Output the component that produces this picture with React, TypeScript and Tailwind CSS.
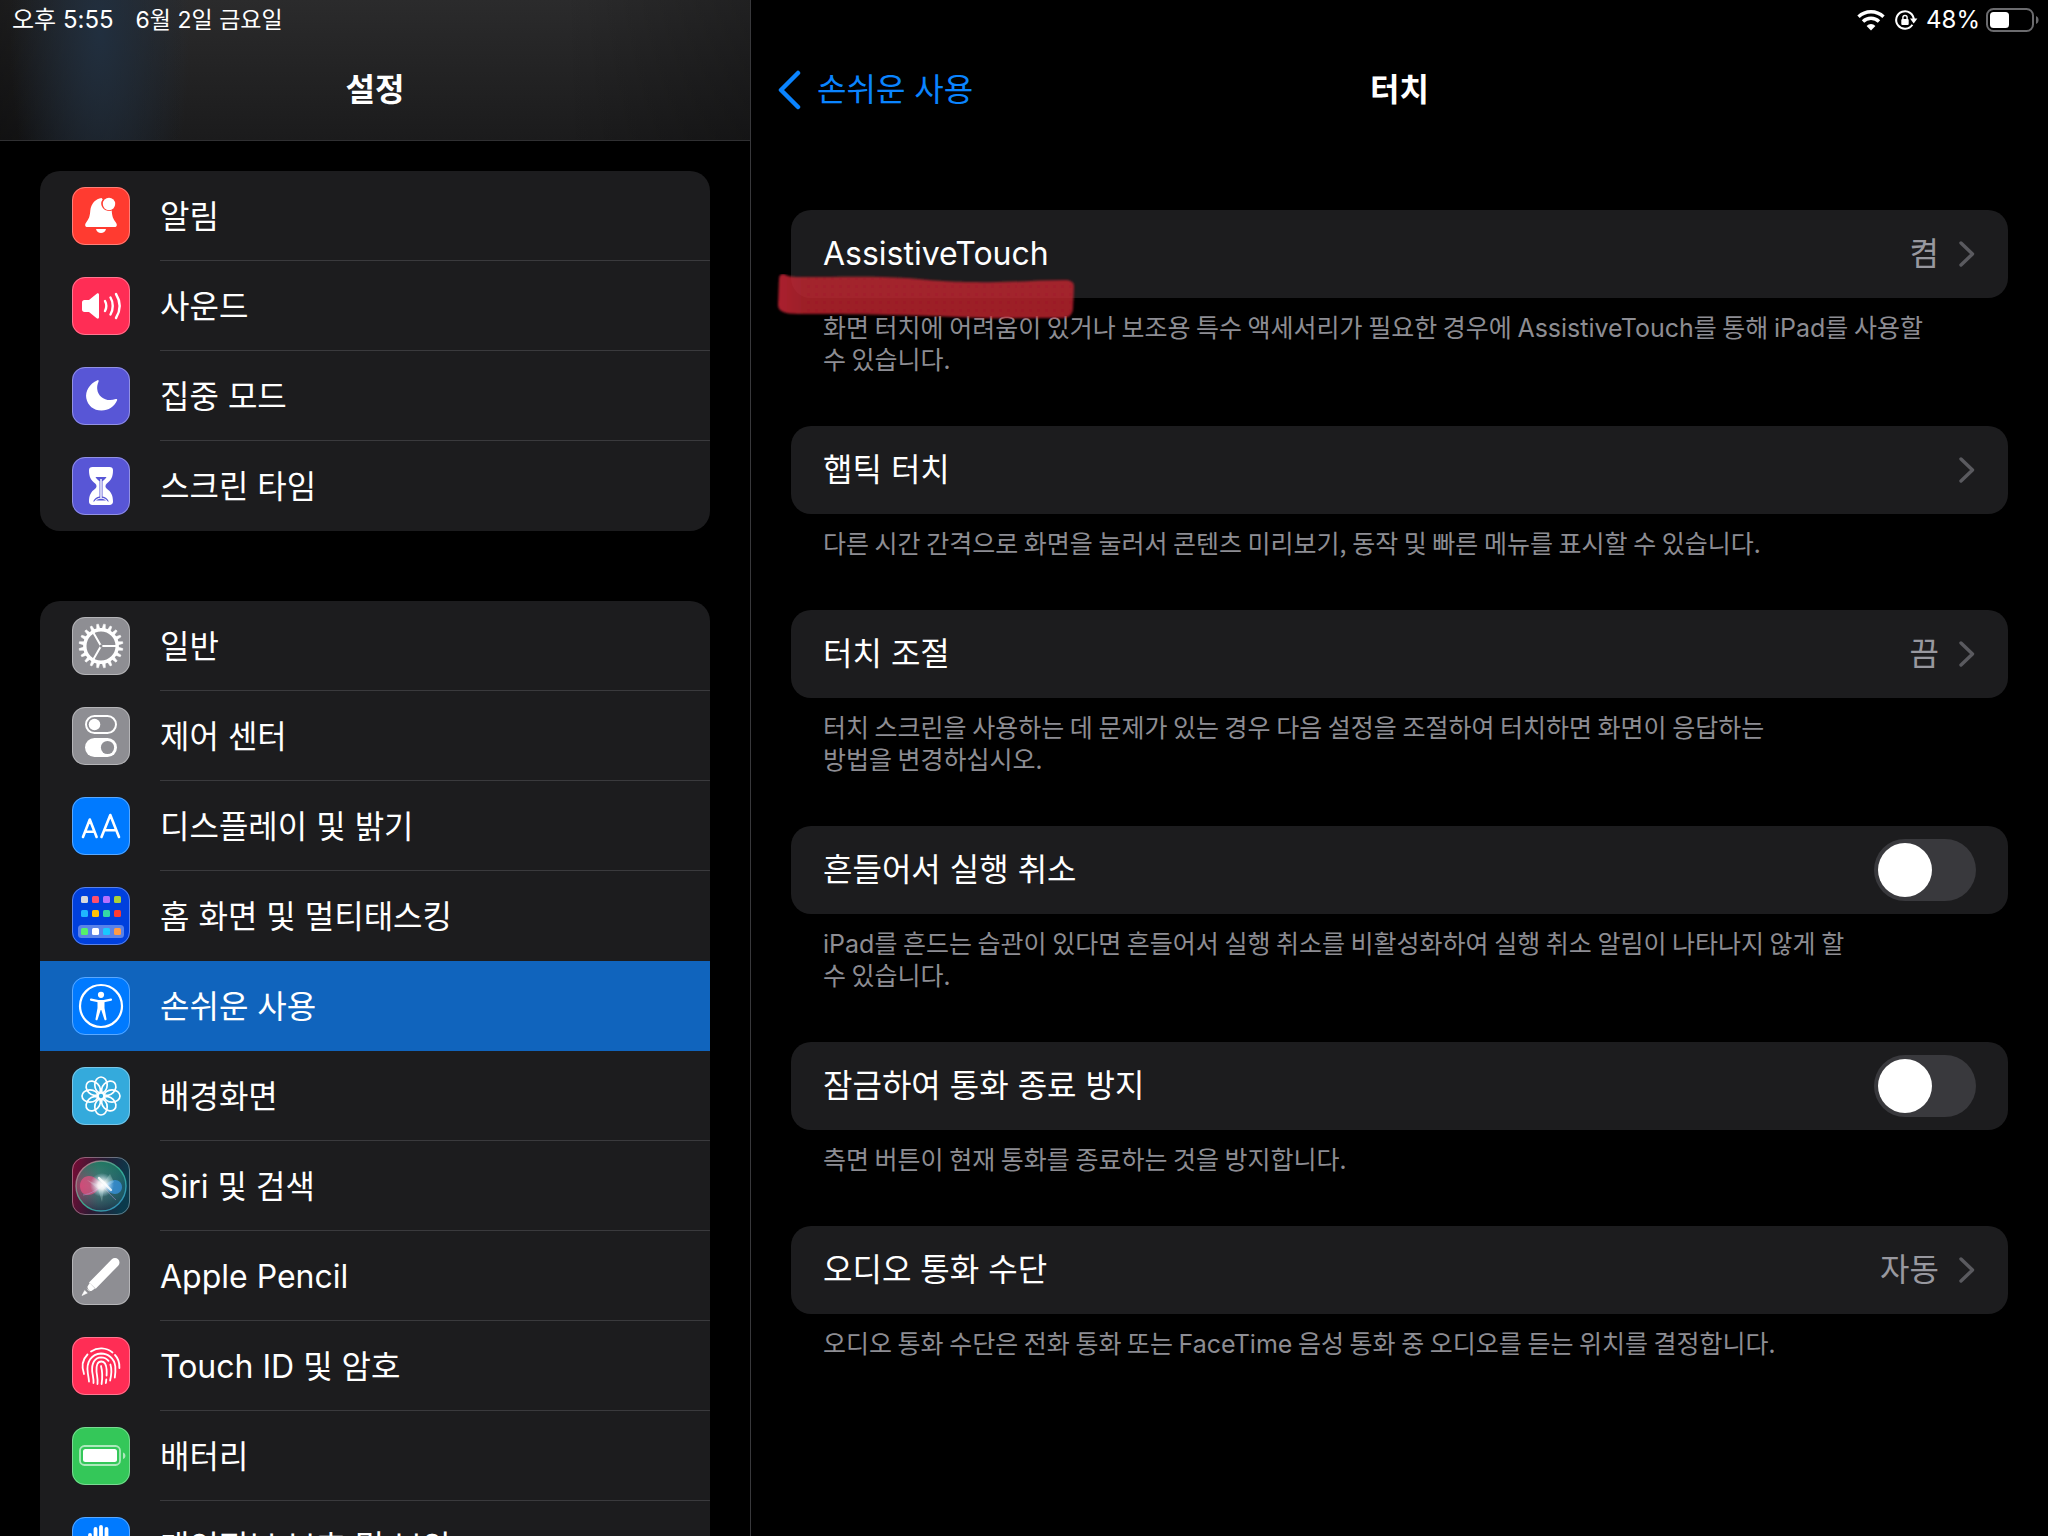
import type { ReactNode } from "react";

type IconProps = {
  bg: string
  children: ReactNode
}

const gearTeeth = Array.from({ length: 20 }, (_, i) => i * 18)
const petals = Array.from({ length: 8 }, (_, i) => i * 45)

const homeApps = [
  { x: 9, y: 9, fill: "#d8d8dc" },
  { x: 20, y: 9, fill: "#ff4f6d" },
  { x: 31, y: 9, fill: "#b570ff" },
  { x: 42, y: 9, fill: "#a9d138" },
  { x: 9, y: 23, fill: "#1fb6ff" },
  { x: 20, y: 23, fill: "#ffc107" },
  { x: 31, y: 23, fill: "#34d8a6" },
  { x: 42, y: 23, fill: "#ff3b30" },
  { x: 9, y: 41, fill: "#55f06c" },
  { x: 20, y: 41, fill: "#ffffff" },
  { x: 31, y: 41, fill: "#19c8ff" },
  { x: 42, y: 41, fill: "#ff9a45" },
]

const Icon = ({ bg, children }: IconProps) => (
  <svg className="size-[58px] shrink-0" viewBox="0 0 58 58" fill="none" aria-hidden="true">
    <rect width="58" height="58" rx="13" fill={bg} />
    {children}
    <rect x="0.5" y="0.5" width="57" height="57" rx="12.5" stroke="#fff" strokeOpacity="0.35" />
  </svg>
)

const BellIcon = () => (
  <Icon bg="#ff3b30">
    <path d="M29.5 11c-5.700.7-10.500 5.500-11.200 12.400-.5 6.300-1.300 8.100-4 11.800-1.900 2.600-1.300 4.800 1.200 4.800h27c2.500 0 3.100-2.200 1.200-4.800-2.700-3.700-3.500-5.500-4-11.800a7.500 7.500 0 0 1-9-11.200z" fill="#fff" />
    <circle cx="37" cy="17" r="6.200" fill="#fff" />
    <path d="M24 42h10c-.6 2.600-2.600 4-5 4s-4.400-1.400-5-4z" fill="#fff" />
  </Icon>
)

const SoundIcon = () => (
  <Icon bg="#ff2d55">
    <path d="M10 25.500c0-1.500.9-2.500 2.500-2.500H17l7.700-6.200c1.100-.9 2.300-.4 2.300 1v22.400c0 1.400-1.200 1.900-2.300 1L17 35h-4.500c-1.600 0-2.500-1-2.500-2.500z" fill="#fff" />
    <path d="M33 24c1.600 3 1.600 7 0 10M38.500 20.500c3 5 3 12 0 17M44 17c4.600 7.500 4.600 16.500 0 24" stroke="#fff" strokeWidth="2.400" strokeLinecap="round" />
  </Icon>
)

const MoonIcon = () => (
  <Icon bg="#5856d6">
    <path d="M25.500 13.200c-8.200 3.600-12.400 11.200-11.200 18 1.300 7.300 7.300 12.300 15.200 12.300 7 0 13-3.800 15.600-10.200.4-1-.3-1.700-1.300-1.300-8.700 3.400-17.800-1.400-18.600-10-.2-2.600.3-4.800 1.300-7.200.5-1.200-.1-2-1-1.600z" fill="#fff" />
  </Icon>
)

const HourglassIcon = () => (
  <Icon bg="#5856d6">
    <path d="M20.500 10h17c2.200 0 3.500 1.200 3.500 3.200 0 7-2 10.200-6.200 13.200-1.800 1.300-1.800 4 0 5.300C39 34.700 41 38 41 44.800c0 2-1.300 3.200-3.500 3.200h-17c-2.200 0-3.500-1.200-3.500-3.200 0-6.800 2-10.100 6.200-13.100 1.800-1.300 1.800-4 0-5.300C19 23.400 17 20.200 17 13.200c0-2 1.300-3.200 3.500-3.200z" fill="#fff" />
    <path d="M23.500 20h11c-1 1.800-2.200 3-4 4.300v15.200c2.800.6 5 2 6.400 5H21.100c1.400-3 3.600-4.400 6.400-5V24.300c-1.800-1.300-3-2.500-4-4.300z" fill="#5856d6" />
    <path d="M29 22v20" stroke="#fff" strokeWidth="1.400" />
    <path d="M22 45c1.800-2.800 4-4.200 7-4.200s5.200 1.400 7 4.200z" fill="#fff" />
    <path d="M24 43.500c1.400-1.200 3-1.700 5-1.700s3.600.5 5 1.700z" fill="#5856d6" />
  </Icon>
)

const GearIcon = () => (
  <Icon bg="#8e8e93">
    {gearTeeth.map((angle) => (
      <path key={angle} d="M27.400 12l.7-5h1.800l.7 5z" fill="#fff" stroke="#fff" strokeWidth="0.500" transform={`rotate(${angle + 9} 29 29)`} />
    ))}
    <circle cx="29" cy="29" r="16.200" stroke="#fff" strokeWidth="3.400" />
    <path d="M29 29h16M29 29l-8-14M29 29l-8 14" stroke="#fff" strokeWidth="2" />
    <circle cx="29" cy="29" r="1.500" fill="#8e8e93" />
  </Icon>
)

const ControlIcon = () => (
  <Icon bg="#8e8e93">
    <rect x="14" y="9" width="30" height="17" rx="8.500" stroke="#fff" strokeWidth="2" />
    <circle cx="22.500" cy="17.500" r="5.800" fill="#fff" />
    <rect x="13" y="31" width="32" height="19" rx="9.500" fill="#fff" />
    <circle cx="35.500" cy="40.500" r="6.600" fill="#8e8e93" />
  </Icon>
)

const DisplayIcon = () => (
  <Icon bg="#007aff">
    <path d="M11 40l6.800-17.500L24.600 40M13.300 34.700h9M29.500 40l8.800-22 8.700 22M32.300 33.200h12" stroke="#fff" strokeWidth="2.600" strokeLinecap="round" strokeLinejoin="round" />
  </Icon>
)

const HomeIcon = () => (
  <Icon bg="#0040dd">
    <rect x="6" y="38" width="46" height="13" rx="3.500" fill="#fff" fillOpacity="0.350" />
    {homeApps.map((app) => (
      <rect key={`${app.x}-${app.y}`} x={app.x} y={app.y} width="7" height="7" rx="1.500" fill={app.fill} />
    ))}
  </Icon>
)

const AccessibilityIcon = () => (
  <Icon bg="#007aff">
    <circle cx="29" cy="29" r="21" stroke="#fff" strokeWidth="2.200" />
    <circle cx="29" cy="17.800" r="3.100" fill="#fff" />
    <path d="M19 22.600l7.200 1.500h5.600l7.200-1.500" stroke="#fff" strokeWidth="2.200" strokeLinecap="round" strokeLinejoin="round" />
    <path d="M25.500 23.500h7v7.500l2 11c.3 1.400-1.700 1.900-2.100.5L29.300 33h-.6l-3.100 9.500c-.4 1.400-2.400.9-2.100-.5l2-11z" fill="#fff" />
  </Icon>
)

const WallpaperIcon = () => (
  <Icon bg="#34aadc">
    {petals.map((angle) => (
      <ellipse key={angle} cx="29" cy="18" rx="6.200" ry="8" stroke="#fff" strokeWidth="1.700" transform={`rotate(${angle} 29 29)`} />
    ))}
    <circle cx="29" cy="29" r="3" stroke="#fff" strokeWidth="1.200" />
  </Icon>
)

const SiriIcon = () => (
  <Icon bg="url(#siri-bg)">
    <defs>
      <linearGradient id="siri-bg" x1="0" y1="0" x2="1" y2="0.200">
        <stop offset="0" stopColor="#7d0b35" />
        <stop offset="0.500" stopColor="#2b1a33" />
        <stop offset="1" stopColor="#0a3a4c" />
      </linearGradient>
      <linearGradient id="siri-orb" x1="0" y1="0.500" x2="1" y2="0.500">
        <stop offset="0" stopColor="#b32a5c" />
        <stop offset="0.450" stopColor="#4f6e76" />
        <stop offset="1" stopColor="#12485f" />
      </linearGradient>
      <linearGradient id="siri-top" x1="0" y1="0" x2="0" y2="1">
        <stop offset="0" stopColor="#157a5c" stopOpacity="0.800" />
        <stop offset="0.500" stopColor="#2f8a76" stopOpacity="0.200" />
        <stop offset="1" stopColor="#14223a" stopOpacity="0.700" />
      </linearGradient>
      <linearGradient id="siri-ring" x1="0" y1="0" x2="1" y2="1">
        <stop offset="0" stopColor="#f26a90" />
        <stop offset="0.500" stopColor="#38c59b" />
        <stop offset="1" stopColor="#3a9be0" />
      </linearGradient>
      <radialGradient id="siri-glow">
        <stop offset="0" stopColor="#fff" />
        <stop offset="0.350" stopColor="#fff" stopOpacity="0.850" />
        <stop offset="1" stopColor="#bfeaff" stopOpacity="0" />
      </radialGradient>
    </defs>
    <circle cx="29" cy="29" r="25" fill="url(#siri-orb)" />
    <circle cx="29" cy="29" r="25" fill="url(#siri-top)" />
    <path d="M8 29c0-6 4-10 9-10 6 0 9 5 14 9-5 5-9 10-15 10-5 0-8-4-8-9z" fill="#ff4f86" fillOpacity="0.600" />
    <path d="M30 29c5-2 8-6 13-6 4 0 7 3 7 7s-3 7-7 7c-5 0-8-5-13-8z" fill="#3a9bf2" fillOpacity="0.650" />
    <path d="M11 38c8-1 13-5 19-9 5 4 8 9 14 14" stroke="#b896d8" strokeOpacity="0.500" />
    <path d="M29 29l9-12 4 8-10 6-2 14-4-13-11-9z" fill="#dffff6" fillOpacity="0.250" />
    <circle cx="30" cy="28" r="12" fill="url(#siri-glow)" />
    <path d="M27 21l12 12" stroke="#fff" strokeWidth="2.400" strokeLinecap="round" strokeOpacity="0.800" />
    <circle cx="29" cy="29" r="25" stroke="url(#siri-ring)" strokeWidth="1.400" strokeOpacity="0.800" />
  </Icon>
)

const PencilIcon = () => (
  <Icon bg="#8e8e93">
    <path d="M19 40L43 15.500" stroke="#fff" strokeWidth="9" strokeLinecap="round" />
    <path d="M11.500 38.500l5-3.500 8 7.500-4.500 4z" fill="#8e8e93" />
    <path d="M15.500 39.500l2.200-3.600 5.300 5.600-3.600 2.500c-1.700.6-4.300-2.300-3.900-4.500z" fill="#fff" />
    <path d="M10 48.500l2.700-5 2.600 2.500z" fill="#fff" stroke="#fff" strokeWidth="0.600" strokeLinejoin="round" />
  </Icon>
)

const TouchIdIcon = () => (
  <Icon bg="#ff2d55">
    <g stroke="#fff" strokeWidth="1.800" strokeLinecap="round">
      <path d="M19 14.500a18 18 0 0 1 21.500 1" />
      <path d="M12 37c-2.800-8-1-15 3.500-19.500" />
      <path d="M43 18c3.200 3.300 4.600 7.600 4.400 13" />
      <path d="M17 44.500c-.2-3-.8-5.500-1.200-8.500C14 25 19.500 17 29 16.500c7 0 13.500 5 14.300 13 .3 4 .1 7.500-.5 11" />
      <path d="M21.500 46c.3-4-.8-7.500-1.300-11.500C19.500 26.500 22.500 20.500 29 20.300c3.200 0 5.800 1.400 7.500 3.600" />
      <path d="M38.400 27.500c1.300 4 .9 11-.3 16" />
      <path d="M25.500 47c.6-4.500-.6-8.500-1-12.500-.5-6 1-10 4.800-10 3.400 0 5 3.600 5.300 8 .2 2 .1 4 0 6" />
      <path d="M34.300 42.500l-.4 3.500" />
      <path d="M29 29c1.500 5.500 1.500 12 .6 18" />
    </g>
  </Icon>
)

const BatteryIcon = () => (
  <Icon bg="#34c759">
    <rect x="8" y="19" width="40" height="19" rx="4.500" stroke="#fff" strokeOpacity="0.600" strokeWidth="1.800" />
    <rect x="11" y="22" width="34" height="13" rx="2.500" fill="#fff" />
    <path d="M51 25.500c3.200 1 3.200 5.500 0 6.500z" fill="#fff" fillOpacity="0.600" />
  </Icon>
)

const HandIcon = () => (
  <Icon bg="#007aff">
    <path d="M18 34V18M23.500 30V12M29 30V10M34.500 30V12" stroke="#fff" strokeWidth="3.800" strokeLinecap="round" />
    <path d="M16 28h20.500v6l4-6c2-2.500 5-.5 4 2l-5 12c-2 4.500-5 6.500-10.500 6.500-8 0-13-5-13-13z" fill="#fff" />
  </Icon>
)

const menuGroups = [
  [
    { label: "알림", icon: <BellIcon /> },
    { label: "사운드", icon: <SoundIcon /> },
    { label: "집중 모드", icon: <MoonIcon /> },
    { label: "스크린 타임", icon: <HourglassIcon /> },
  ],
  [
    { label: "일반", icon: <GearIcon /> },
    { label: "제어 센터", icon: <ControlIcon /> },
    { label: "디스플레이 및 밝기", icon: <DisplayIcon /> },
    { label: "홈 화면 및 멀티태스킹", icon: <HomeIcon /> },
    { label: "손쉬운 사용", icon: <AccessibilityIcon />, active: true },
    { label: "배경화면", icon: <WallpaperIcon /> },
    { label: "Siri 및 검색", icon: <SiriIcon /> },
    { label: "Apple Pencil", icon: <PencilIcon /> },
    { label: "Touch ID 및 암호", icon: <TouchIdIcon /> },
    { label: "배터리", icon: <BatteryIcon /> },
    { label: "개인정보 보호 및 보안", icon: <HandIcon /> },
  ],
]

type MenuItemProps = {
  label: string
  icon: ReactNode
  active?: boolean
  divider: boolean
}

const MenuItem = ({ label, icon, active, divider }: MenuItemProps) => (
  <li>
    <a
      href="#"
      aria-current={active ? "page" : undefined}
      className={`flex h-[90px] items-center gap-[30px] pl-8 ${active ? "bg-[#1064bd]" : ""}`}>
      {icon}
      <span className={`flex h-full flex-1 items-center border-b pt-[3px] ${divider ? "border-[#3a3a3d]" : "border-transparent"}`}>
        {label}
      </span>
    </a>
  </li>
)

const Chevron = () => (
  <svg className="h-[26px] w-4 shrink-0" viewBox="0 0 16 26" fill="none" aria-hidden="true">
    <path d="M2 2l11.500 11L2 24" stroke="#5a5a5f" strokeWidth="3.400" strokeLinecap="round" strokeLinejoin="round" />
  </svg>
)

type SectionProps = {
  children: ReactNode
  note: ReactNode
}

const Section = ({ children, note }: SectionProps) => (
  <section className="relative mb-[52px]">
    {children}
    <p className="px-8 pt-3 font-['Noto_Sans_CJK_KR',sans-serif] text-[25px] leading-8 text-[#8d8d93]">{note}</p>
  </section>
)

const Latin = ({ children }: { children: string }) => (
  <span className="font-[Inter,sans-serif] leading-none">{children}</span>
)

const LinkRow = ({ label, value }: { label: string, value?: string }) => (
  <a href="#" className="flex h-[88px] items-center rounded-[20px] bg-[#1c1c1e] pr-[33px] pl-8">
    <span className="flex-1">{label}</span>
    <span className="mr-5 text-[#98989f]">{value}</span>
    <Chevron />
  </a>
)

const SwitchRow = ({ label }: { label: string }) => (
  <label className="flex h-[88px] items-center justify-between rounded-[20px] bg-[#1c1c1e] pr-8 pl-8">
    <span>{label}</span>
    <input
      type="checkbox"
      role="switch"
      className="flex h-[62px] w-[102px] appearance-none items-center rounded-full bg-[#39393d] p-1 before:size-[54px] before:rounded-full before:bg-white checked:justify-end checked:bg-[#30d158]" />
  </label>
)

const Marker = () => (
  <svg className="pointer-events-none absolute top-16 -left-4 h-12 w-[304px]" viewBox="0 0 304 48" fill="none" aria-hidden="true">
    <defs>
      <linearGradient id="marker-ink" x1="0" y1="0" x2="1" y2="0">
        <stop offset="0" stopColor="#d6283a" />
        <stop offset="0.080" stopColor="#c42431" />
        <stop offset="1" stopColor="#c42431" />
      </linearGradient>
      <filter id="marker-edge">
        <feGaussianBlur stdDeviation="0.800" />
      </filter>
    </defs>
    <path
      d="M4 5C4 0 8-1 11 1c4 2 10 2 20 2 30 0 70-1 100 1 25 2 40 4 70 4 30 1 60-2 89-2 6 0 9 2 9 7l-1 22c-1 7-5 9-12 9-35 0-70 1-105-1-40-2-110-3-158-3C9 40 3 37 3 31z"
      fill="url(#marker-ink)"
      fillOpacity="0.800"
      filter="url(#marker-edge)" />
  </svg>
)

const StatusIcons = () => (
  <div className="flex items-center">
    <svg className="mr-2 h-[22px] w-[30px]" viewBox="0 0 30 22" fill="none" aria-hidden="true">
      <path d="M2.500 7.800a18 18 0 0 1 25 0M7 12.400a11.600 11.600 0 0 1 16 0" stroke="#fff" strokeWidth="3.400" />
      <path d="M15 21.500l-4.400-4.600a6.300 6.300 0 0 1 8.800 0z" fill="#fff" />
    </svg>
    <svg className="mr-2 h-[22px] w-6" viewBox="0 0 24 22" fill="none" aria-hidden="true">
      <path d="M18.400 15.800A8.800 8.800 0 1 1 19.800 11" stroke="#fff" strokeWidth="2" />
      <path d="M16 9.500h7.400l-3.700 5z" fill="#fff" />
      <rect x="7.300" y="10" width="7.400" height="6" rx="1" fill="#fff" />
      <path d="M8.900 10.500V8.600a2.100 2.100 0 0 1 4.200 0v1.900" stroke="#fff" strokeWidth="1.400" />
    </svg>
    <span className="mr-1.5">48%</span>
    <svg className="h-6 w-[54px]" viewBox="0 0 54 24" fill="none" aria-hidden="true">
      <rect x="1" y="1" width="46" height="22" rx="6.500" stroke="#6b6b6e" strokeWidth="2" />
      <rect x="4" y="4" width="19" height="16" rx="3.500" fill="#fff" />
      <path d="M50 8c3.400 1.200 3.400 6.800 0 8z" fill="#6b6b6e" />
    </svg>
  </div>
)

const App = () => {
  return (
    <div className="flex h-screen overflow-hidden bg-black font-[Inter,'Noto_Sans_CJK_KR',sans-serif] text-[32px] leading-10 text-white">
      <aside className="w-[751px] shrink-0 border-r border-[#38383b]">
        <header className="h-[141px] border-b border-[#303032] bg-[radial-gradient(ellipse_90px_260px_at_100px_30px,#212f3f_0%,#212f3f00_100%),linear-gradient(90deg,#00000060_0%,#00000000_25%,#00000000_75%,#00000040_100%),linear-gradient(#2b2b2c,#1b1b1c)]">
          <div className="flex h-10 items-center gap-[22px] pl-3 text-2xl">
            <time>오후 5:55</time>
            <span className="text-[23px]">6월 2일 금요일</span>
          </div>
          <h1 className="flex h-[100px] items-center justify-center font-semibold">설정</h1>
        </header>
        <nav className="flex flex-col gap-[70px] px-10 pt-[30px]">
          {menuGroups.map((group, index) => (
            <ul key={index} className="overflow-hidden rounded-[20px] bg-[#1c1c1e]">
              {group.map((item, i) => (
                <MenuItem
                  key={item.label}
                  {...item}
                  divider={i < group.length - 1 && !item.active && !group[i + 1].active} />
              ))}
            </ul>
          ))}
        </nav>
      </aside>

      <main className="min-w-0 flex-1">
        <div className="flex h-10 items-center justify-end pr-2 text-2xl">
          <StatusIcons />
        </div>
        <header className="grid h-[100px] grid-cols-3 items-center">
          <a href="#" className="flex items-center gap-4 pl-[26px] text-[#0a84ff]">
            <svg className="h-10 w-6" viewBox="0 0 24 40" fill="none" aria-hidden="true">
              <path d="M21 3L4 20l17 17" stroke="currentColor" strokeWidth="4.500" strokeLinecap="round" strokeLinejoin="round" />
            </svg>
            손쉬운 사용
          </a>
          <h2 className="text-center font-semibold">터치</h2>
        </header>

        <div className="px-10 pt-[70px]">
          <Section note={<>화면 터치에 어려움이 있거나 보조용 특수 액세서리가 필요한 경우에 <Latin>AssistiveTouch</Latin>를 통해 <Latin>iPad</Latin>를 사용할<br />수 있습니다.</>}>
            <LinkRow label="AssistiveTouch" value="켬" />
            <Marker />
          </Section>
          <Section note="다른 시간 간격으로 화면을 눌러서 콘텐츠 미리보기, 동작 및 빠른 메뉴를 표시할 수 있습니다.">
            <LinkRow label="햅틱 터치" />
          </Section>
          <Section note={<>터치 스크린을 사용하는 데 문제가 있는 경우 다음 설정을 조절하여 터치하면 화면이 응답하는<br />방법을 변경하십시오.</>}>
            <LinkRow label="터치 조절" value="끔" />
          </Section>
          <Section note={<><Latin>iPad</Latin>를 흔드는 습관이 있다면 흔들어서 실행 취소를 비활성화하여 실행 취소 알림이 나타나지 않게 할<br />수 있습니다.</>}>
            <SwitchRow label="흔들어서 실행 취소" />
          </Section>
          <Section note="측면 버튼이 현재 통화를 종료하는 것을 방지합니다.">
            <SwitchRow label="잠금하여 통화 종료 방지" />
          </Section>
          <Section note={<>오디오 통화 수단은 전화 통화 또는 <Latin>FaceTime</Latin> 음성 통화 중 오디오를 듣는 위치를 결정합니다.</>}>
            <LinkRow label="오디오 통화 수단" value="자동" />
          </Section>
        </div>
      </main>
    </div>
  );
}


export default App
